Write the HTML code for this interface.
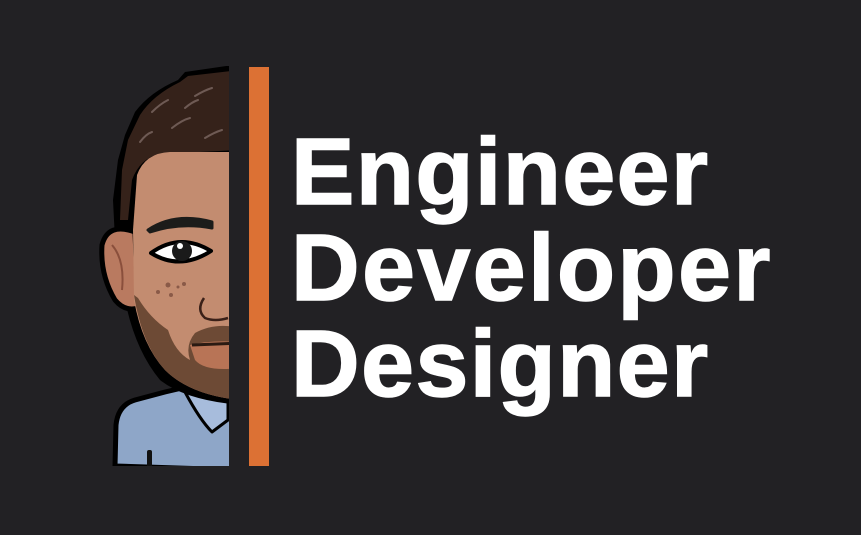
<!DOCTYPE html>
<html><head><meta charset="utf-8"><style>
html,body{margin:0;padding:0;background:#222124;width:861px;height:535px;overflow:hidden}
svg{display:block}
</style></head><body>
<svg width="861" height="535" viewBox="0 0 861 535" xmlns="http://www.w3.org/2000/svg">
<rect width="861" height="535" fill="#222124"/>
<defs><clipPath id="c"><rect x="80" y="66" width="149" height="400"/></clipPath></defs>
<g clip-path="url(#c)" stroke-linejoin="round">
 <path d="M115,466 L116,425 Q118,405 135,400 L165,392 L195,385 L240,385 L240,470 Z" fill="#8ea6c8" stroke="#000" stroke-width="5"/>
 <path d="M185,392 Q200,420 212,432 L228,420 L228,390 Z" fill="#a7bcdc" stroke="#000" stroke-width="3"/>
 <rect x="147" y="450" width="5" height="20" rx="2" fill="#111"/>
 <path d="M240,64 L185,72 L178,80 Q150,92 135,112 L125,135 L118,160 L113,200 L115,240 L125,300 Q135,350 160,380 Q185,400 240,405 Z" fill="#000"/>
 <path d="M135,232 Q108,222 102,245 Q100,275 115,300 Q125,312 138,308 Z" fill="#b97a60" stroke="#000" stroke-width="5"/>
 <path d="M112,245 Q125,260 122,290" fill="none" stroke="#8a4f3c" stroke-width="2"/>
 <path d="M240,70 L188,76 L180,82 Q153,95 140,115 L128,140 L122,170 L120,220 L128,220 L132,180 Q140,158 160,154 L240,150 Z" fill="#35221a"/>
 <path d="M152,112 Q160,104 168,100 M172,128 Q182,120 190,118 M195,96 Q205,90 212,88 M205,138 Q215,132 222,130 M140,142 Q146,134 152,132 M185,108 Q192,102 198,100" stroke="#6e5a54" stroke-width="2" fill="none" stroke-linecap="round"/>
 <path d="M240,152 L170,152 Q145,153 137,175 L133,230 L134,300 Q142,345 165,370 Q190,395 240,400 Z" fill="#c38c70"/>
 <path d="M134,295 Q142,345 165,370 Q190,395 240,400 L240,328 Q215,322 195,333 Q185,345 190,360 Q175,352 168,330 Q150,318 138,298 Z" fill="#6d4a35"/>
 <path d="M190,345 Q210,340 240,342 L240,368 Q205,372 195,360 Z" fill="#b87456"/>
 <path d="M192,345 L240,343" stroke="#2a1a12" stroke-width="3"/>
 <path d="M148,230 Q175,212 212,222 L212,228 Q180,222 150,232 Z" fill="#1c1c1a" stroke="#1c1c1a" stroke-width="3"/>
 <path d="M151,253 Q180,232 211,251 Q180,271 151,253 Z" fill="#fff" stroke="#000" stroke-width="4"/>
 <circle cx="182" cy="251" r="10" fill="#1a1a1a"/>
 <circle cx="180" cy="246" r="3" fill="#fff"/>
 <circle cx="158" cy="292" r="2" fill="#8a5a48"/><circle cx="168" cy="285" r="2.5" fill="#8a5a48"/><circle cx="171" cy="295" r="2" fill="#8a5a48"/><circle cx="178" cy="287" r="1.5" fill="#8a5a48"/><circle cx="184" cy="284" r="2" fill="#8a5a48"/>
 <path d="M204,298 Q196,310 205,318 Q215,322 228,318" fill="none" stroke="#3a2018" stroke-width="2.5"/>
</g>
<rect x="249" y="67" width="20" height="399" fill="#dc7134"/>
<g font-family="Liberation Sans, sans-serif" font-weight="bold" font-size="95" fill="#fff" stroke="#fff" stroke-width="1.5" letter-spacing="1.5">
 <text x="291" y="204">Engineer</text>
 <text x="291" y="300" letter-spacing="2.5">Developer</text>
 <text x="291" y="396">Designer</text>
</g>
</svg>
</body></html>
